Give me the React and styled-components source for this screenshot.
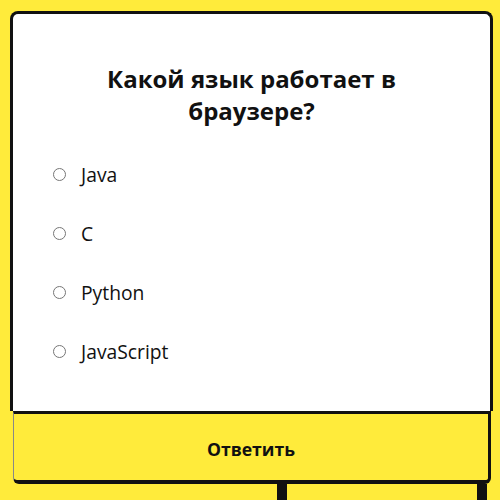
import React from "react";
import styled, { createGlobalStyle } from "styled-components";

const GlobalStyle = createGlobalStyle`
html, body {
  margin: 0;
  padding: 0;
  background: #ffeb3b;
  font-family: "Open Sans", "Noto Sans", sans-serif;
  overflow: hidden;
}
`;

const Page = styled.div`
  width: 500px;
  height: 500px;
  padding: 11px 0 0 10px;
  box-sizing: border-box;
`;

const Card = styled.div`
  width: 483px;
  box-sizing: border-box;
  background: #fff;
  border: 3px solid #111;
  border-bottom: none;
  border-radius: 8px 8px 0 0;
  padding: 49px 40px 0 40px;
  height: 400px;
`;

const Title = styled.h2`
  margin: 0 auto;
  max-width: 360px;
  text-align: center;
  font-size: 24px;
  line-height: 32px;
  font-weight: 700;
  color: #111;
`;

const Options = styled.ul`
  list-style: none;
  margin: 18px 0 0 0;
  padding: 0;
`;

const Option = styled.li`
  display: flex;
  align-items: center;
  height: 59px;
`;

const Radio = styled.input`
  width: 13px;
  height: 13px;
  margin: 0 15px 0 0;
`;

const Label = styled.label`
  font-size: 19.3px;
  color: #111;
`;

const Button = styled.button`
  display: block;
  margin-left: 3px;
  width: 478px;
  height: 73px;
  padding-top: 5px;
  box-sizing: border-box;
  background: #ffeb3b;
  border-top: 3px solid #111;
  border-right: 3px solid #111;
  border-bottom: 4px solid #111;
  border-left: 1px solid #888;
  border-radius: 0 0 6px 6px;
  font-family: "Open Sans", "Noto Sans", sans-serif;
  font-size: 17.6px;
  font-weight: 700;
  color: #111;
  cursor: pointer;
`;

const Legs = styled.div`
  display: flex;
  gap: 190px;
  padding-left: 267px;
`;

const Leg = styled.div`
  width: 10px;
  height: 20px;
  background: #111;
`;

const options = ["Java", "C", "Python", "JavaScript"];

export default function App() {
  return (
    <Page>
      <GlobalStyle />
      <Card>
        <Title>Какой язык работает в браузере?</Title>
        <Options>
          {options.map((o) => (
            <Option key={o}>
              <Radio type="radio" name="lang" id={o} />
              <Label htmlFor={o}>{o}</Label>
            </Option>
          ))}
        </Options>
      </Card>
      <Button>Ответить</Button>
      <Legs>
        <Leg />
        <Leg />
      </Legs>
    </Page>
  );
}
